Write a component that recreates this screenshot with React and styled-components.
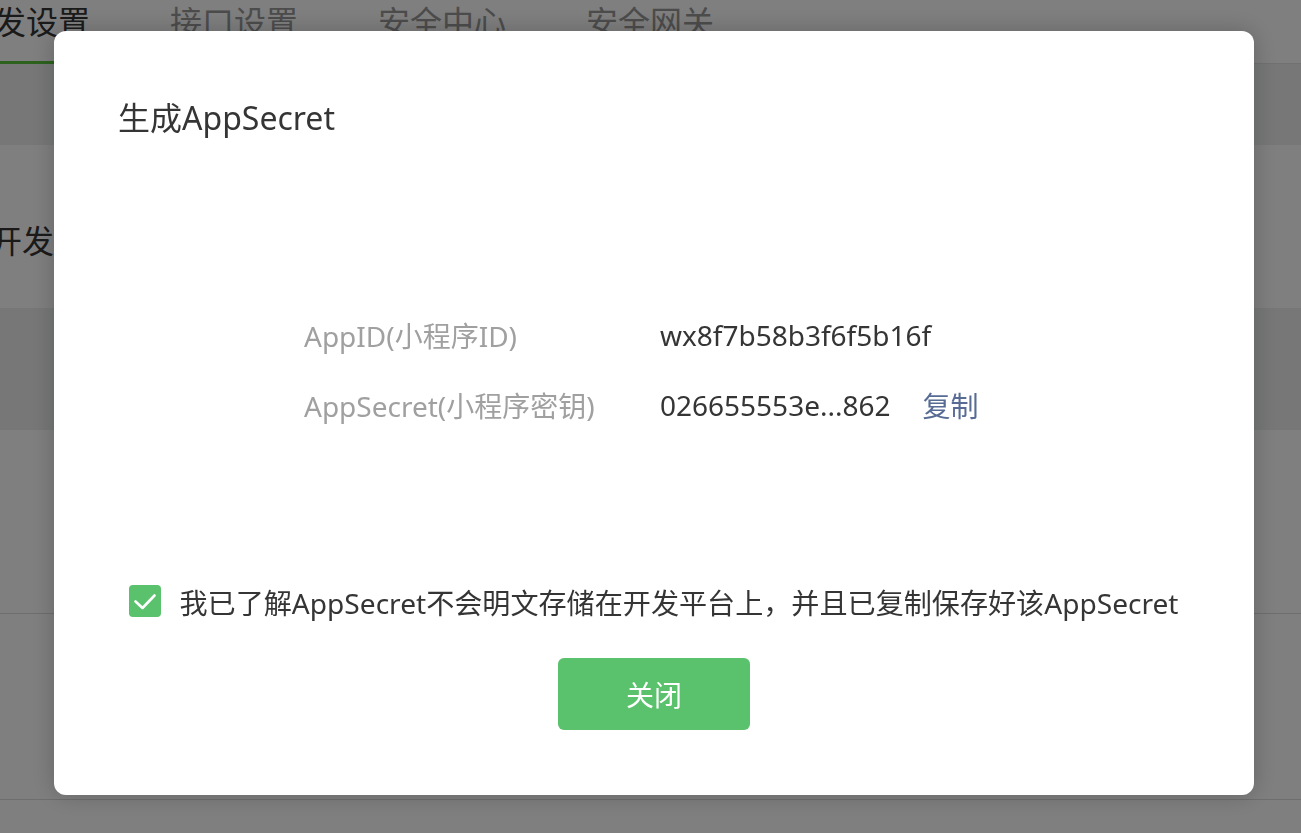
import React from "react";
import styled, { createGlobalStyle } from "styled-components";

const Global = createGlobalStyle`
  html, body { margin: 0; padding: 0; }
  body {
    width: 1301px;
    height: 833px;
    overflow: hidden;
    background: #ffffff;
    font-family: "Noto Sans", "Noto Sans CJK SC", sans-serif;
    color: #353535;
  }
`;

const Page = styled.div`
  width: 1340px;
  height: 833px;
  margin-left: -38px;
  display: flex;
  flex-direction: column;
`;

const TabBar = styled.div`
  height: 64px;
  display: flex;
  gap: 80px;
  border-bottom: 1px solid #e2e2e2;
  box-sizing: border-box;
`;

const Tab = styled.div`
  width: 128px;
  font-size: 32px;
  line-height: 44px;
  color: ${(p) => (p.$active ? "#353535" : "#999999")};
  border-bottom: 3px solid ${(p) => (p.$active ? "#58c43c" : "transparent")};
  height: 64px;
  box-sizing: border-box;
`;

const Band = styled.div`
  height: ${(p) => p.$h}px;
  background: ${(p) => (p.$gray ? "#eeefef" : "#ffffff")};
  border-bottom: ${(p) => (p.$line ? "1px solid #dcdcdc" : "none")};
  box-sizing: border-box;
  display: flex;
  align-items: center;
  padding-left: 28px;
`;

const Heading = styled.div`
  font-size: 32px;
  color: #353535;
  margin-top: 24px;
`;

const Overlay = styled.div`
  position: fixed;
  inset: 0;
  background: rgba(0, 0, 0, 0.5);
  display: flex;
  align-items: center;
  justify-content: center;
  padding: 0 0 7px 7px;
  box-sizing: border-box;
`;

const Modal = styled.div`
  width: 1200px;
  flex-shrink: 0;
  background: #ffffff;
  border-radius: 12px;
  box-shadow: 0 0 24px rgba(0, 0, 0, 0.22);
  box-sizing: border-box;
  padding: 63px 64px 65px;
  display: flex;
  flex-direction: column;
`;

const Title = styled.div`
  font-size: 32px;
  line-height: 48px;
  color: #353535;
`;

const InfoTable = styled.div`
  margin-top: 158px;
  padding-left: 186px;
  display: flex;
  flex-direction: column;
`;

const InfoRow = styled.div`
  height: 70px;
  display: flex;
  align-items: center;
  font-size: 28px;
`;

const Label = styled.div`
  width: 356px;
  color: #a0a0a0;
`;

const Value = styled.div`
  color: #353535;
`;

const Link = styled.a`
  margin-left: 32px;
  color: #576b95;
  text-decoration: none;
  cursor: pointer;
`;

const AgreeRow = styled.label`
  margin-top: 140px;
  height: 42px;
  display: flex;
  align-items: center;
  justify-content: center;
  gap: 18px;
  font-size: 28.1px;
  white-space: nowrap;
  color: #353535;
`;

const CheckBox = styled.span`
  width: 32px;
  height: 32px;
  border-radius: 4px;
  background: #5ac16c;
  display: flex;
  align-items: center;
  justify-content: center;
  flex-shrink: 0;
`;

const Footer = styled.div`
  margin-top: 36px;
  display: flex;
  justify-content: center;
`;

const Button = styled.button`
  width: 192px;
  height: 72px;
  border: none;
  border-radius: 6px;
  background: #5ac16c;
  color: #ffffff;
  font-family: inherit;
  font-size: 28px;
  cursor: pointer;
`;

export default function App() {
  return (
    <>
      <Global />
      <Page>
        <TabBar>
          <Tab $active>开发设置</Tab>
          <Tab>接口设置</Tab>
          <Tab>安全中心</Tab>
          <Tab>安全网关</Tab>
        </TabBar>
        <Band $h={81} $gray />
        <Band $h={163}>
          <Heading>开发者ID</Heading>
        </Band>
        <Band $h={122} $gray />
        <Band $h={184} $line />
        <Band $h={186} $line />
        <Band $h={33} />
      </Page>
      <Overlay>
        <Modal>
          <Title>生成AppSecret</Title>
          <InfoTable>
            <InfoRow>
              <Label>AppID(小程序ID)</Label>
              <Value>wx8f7b58b3f6f5b16f</Value>
            </InfoRow>
            <InfoRow>
              <Label>AppSecret(小程序密钥)</Label>
              <Value>026655553e...862</Value>
              <Link>复制</Link>
            </InfoRow>
          </InfoTable>
          <AgreeRow>
            <CheckBox>
              <svg width="32" height="32" viewBox="0 0 32 32">
                <path d="M6.5 16.5 L13.5 23 L25.5 10.5" fill="none" stroke="#ffffff" strokeWidth="2.6" strokeLinecap="round" strokeLinejoin="round" />
              </svg>
            </CheckBox>
            我已了解AppSecret不会明文存储在开发平台上，并且已复制保存好该AppSecret
          </AgreeRow>
          <Footer>
            <Button>关闭</Button>
          </Footer>
        </Modal>
      </Overlay>
    </>
  );
}
